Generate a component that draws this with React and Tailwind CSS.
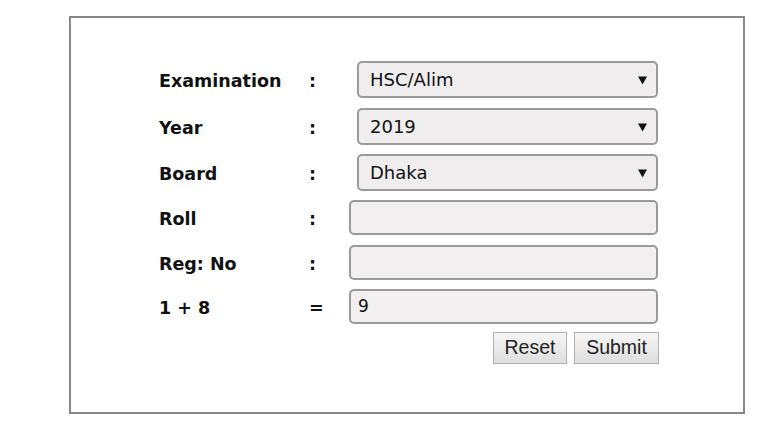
import React from "react";

const Arrow = () => (
  <svg width="9" height="9" viewBox="0 0 9 9" className="absolute right-[9px] top-1/2 -translate-y-1/2">
    <path d="M0 1 L9 1 L4.5 9 Z" fill="#111" />
  </svg>
);

function Row({ label, sep = ":", children, className = "" }) {
  return (
    <div className={"flex items-center " + className}>
      <div className="w-[150px] pt-[3px] text-[17.5px] font-bold text-[#111]">{label}</div>
      <div className="w-[40px] pt-[3px] text-[17.5px] font-bold text-[#111]">{sep}</div>
      {children}
    </div>
  );
}

function Select({ value }) {
  return (
    <div className="relative ml-[8px] flex h-[37px] w-[301px] items-center rounded-[5px] border-2 border-[#9a9a9a] bg-[#efeded] pl-[11px] text-[18px] text-[#111]">
      {value}
      <Arrow />
    </div>
  );
}

function Input({ value = "" }) {
  return (
    <div className="flex h-[35px] w-[309px] items-center rounded-[5px] border-2 border-[#9a9a9a] bg-[#f1efef] pl-[7px] text-[17px] text-[#111]">
      {value}
    </div>
  );
}

export default function App() {
  return (
    <div className="min-h-[436px] bg-white pt-[16px] pl-[69px]" style={{ fontFamily: '"DejaVu Sans", Verdana, sans-serif' }}>
      <div className="h-[398px] w-[676px] border-2 border-[#888888] bg-white pt-[43px] pl-[88px]">
        <div className="w-[500px]">
          <Row label="Examination">
            <Select value="HSC/Alim" />
          </Row>
          <Row label="Year" className="mt-[10px]">
            <Select value="2019" />
          </Row>
          <Row label="Board" className="mt-[9px]">
            <Select value="Dhaka" />
          </Row>
          <Row label="Roll" className="mt-[9px]">
            <Input />
          </Row>
          <Row label="Reg: No" className="mt-[10px]">
            <Input />
          </Row>
          <Row label="1 + 8" sep="=" className="mt-[9px]">
            <Input value="9" />
          </Row>
          <div className="mt-[8px] flex justify-end gap-[7px]" style={{ fontFamily: '"Liberation Sans", Arial, sans-serif' }}>
            <button className="h-[32px] w-[74px] border border-[#b0b0b0] bg-gradient-to-b from-[#f6f6f6] to-[#dedede] text-[19.5px] text-[#222]">
              Reset
            </button>
            <button className="h-[32px] w-[85px] border border-[#b0b0b0] bg-gradient-to-b from-[#f6f6f6] to-[#dedede] text-[19.5px] text-[#222]">
              Submit
            </button>
          </div>
        </div>
      </div>
    </div>
  );
}
